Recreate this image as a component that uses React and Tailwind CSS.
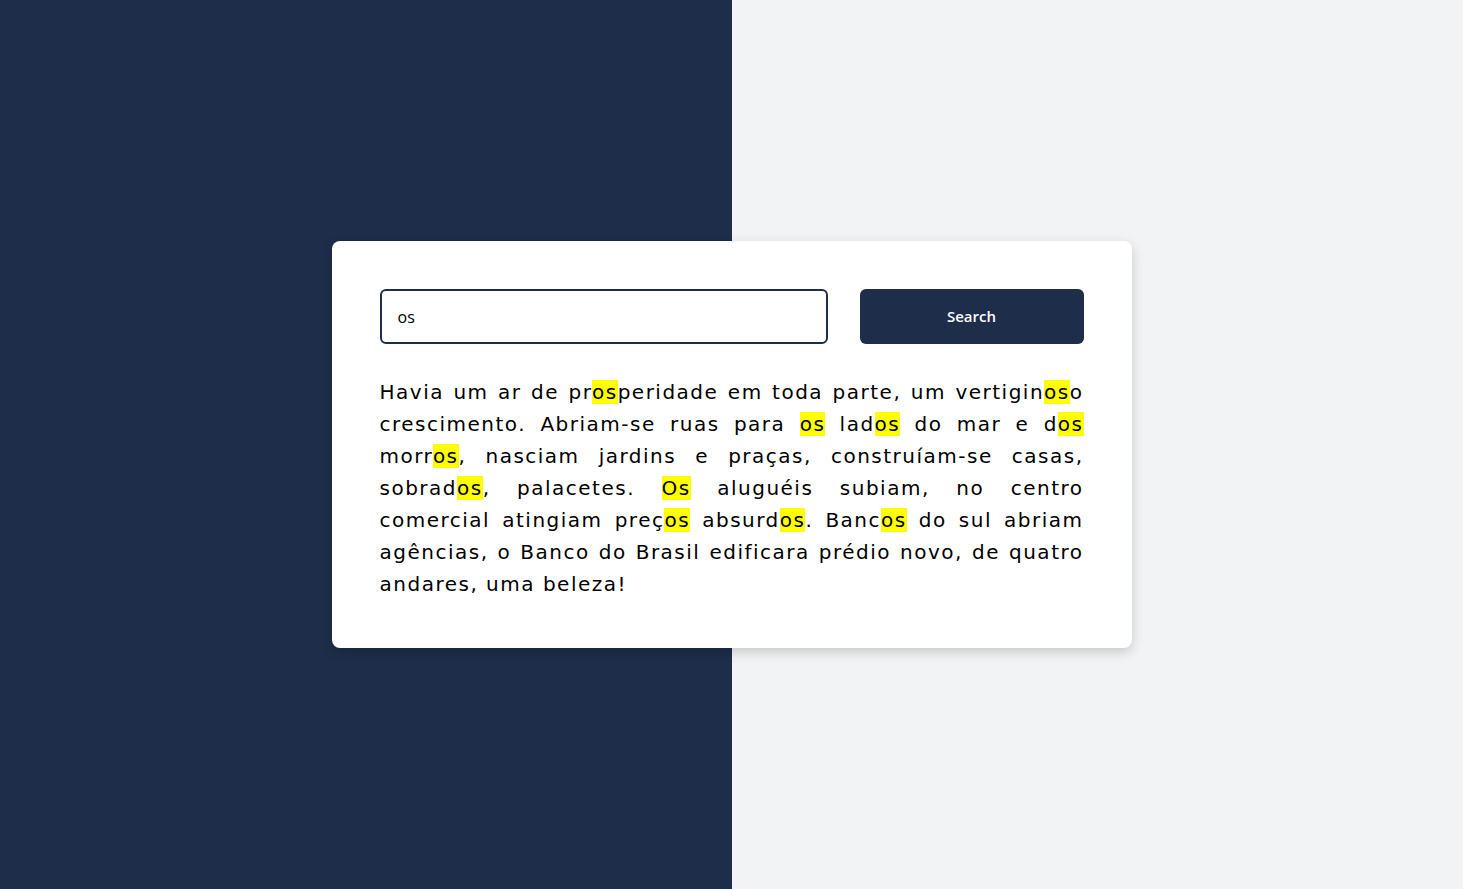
import React, { useState } from 'react';

const TEXT =
  'Havia um ar de prosperidade em toda parte, um vertiginoso crescimento. Abriam-se ruas para os lados do mar e dos morros, nasciam jardins e praças, construíam-se casas, sobrados, palacetes. Os aluguéis subiam, no centro comercial atingiam preços absurdos. Bancos do sul abriam agências, o Banco do Brasil edificara prédio novo, de quatro andares, uma beleza!';

const highlight = (text, term) => {
  if (!term) return text;
  const parts = text.split(new RegExp(`(${term})`, 'gi'));
  return parts.map((part, i) =>
    part.toLowerCase() === term.toLowerCase() ? (
      <mark key={i} className="bg-[#ffff00] text-black">{part}</mark>
    ) : (
      part
    )
  );
};

const App = () => {
  const [query, setQuery] = useState('os');
  const [term, setTerm] = useState('os');

  return (
    <div className="relative min-h-[889px] w-full flex">
      {/* Split background */}
      <div className="w-[732px] bg-[#1e2d4a]"></div>
      <div className="flex-1 bg-[#f2f3f5]"></div>

      <div className="absolute inset-0 flex items-center justify-center">
        <div className="w-[800px] bg-white rounded-lg shadow-[0_4px_12px_rgba(0,0,0,0.18)] p-12">
          <div className="flex gap-8">
            <input
              value={query}
              onChange={(e) => setQuery(e.target.value)}
              className="w-[448px] h-[55px] border-2 border-[#1e2d4a] rounded-md px-4 text-[16px] text-black outline-none font-['Open_Sans',sans-serif]"
            />
            <button
              onClick={() => setTerm(query)}
              className="flex-1 h-[55px] bg-[#1e2d4a] text-white rounded-md text-[15px] font-semibold font-['Open_Sans',sans-serif]"
            >
              Search
            </button>
          </div>

          <p className="mt-[32px] text-justify text-[20px] leading-8 tracking-[0.075em] text-black font-['DejaVu_Sans',sans-serif]">
            {highlight(TEXT, term)}
          </p>
        </div>
      </div>
    </div>
  );
};

export default App;
